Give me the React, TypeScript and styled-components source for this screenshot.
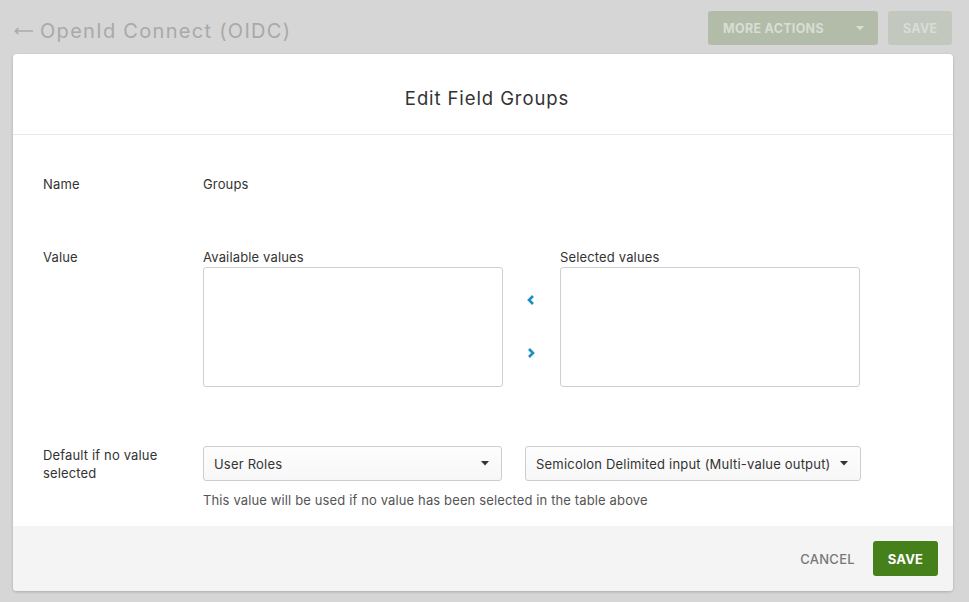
import React from "react";
import styled, { createGlobalStyle } from "styled-components";

const Global = createGlobalStyle`
  html, body { margin: 0; padding: 0; }
  body {
    background: #d6d6d6;
    font-family: "Inter", "Noto Sans", sans-serif;
    color: #333;
    width: 969px;
    height: 602px;
    overflow: hidden;
  }
`;

const Page = styled.div`
  display: flex;
  flex-direction: column;
  padding: 11px 16px 0 13px;
  width: 969px;
  box-sizing: border-box;
`;

const TopBar = styled.div`
  display: flex;
  align-items: center;
  height: 34px;
  margin-bottom: 9px;
  padding-right: 1px;
`;

const BackTitle = styled.div`
  display: flex;
  align-items: center;
  gap: 7px;
  flex: 1;
  color: #a9a9a9;
  font-size: 20px;
  letter-spacing: 1.3px;
  padding-top: 6px;
  padding-left: 1px;
`;

const TopButton = styled.div<{ $bg: string; $w: number }>`
  display: flex;
  align-items: center;
  justify-content: space-between;
  background: ${(p) => p.$bg};
  color: #d9ddd5;
  height: 34px;
  width: ${(p) => p.$w}px;
  box-sizing: border-box;
  border-radius: 3px;
  font-size: 12.5px;
  font-weight: 700;
  letter-spacing: 0.3px;
  padding: 0 14px 0 15px;
  margin-left: 10px;
`;

const Modal = styled.div`
  background: #fff;
  border-radius: 4px;
  box-shadow: 0 1px 3px rgba(0, 0, 0, 0.2);
  width: 940px;
  height: 537px;
  display: flex;
  flex-direction: column;
  overflow: hidden;
`;

const ModalHeader = styled.div`
  height: 81px;
  border-bottom: 1px solid #e8e8e8;
  display: flex;
  align-items: center;
  justify-content: center;
  font-size: 18.5px;
  letter-spacing: 0.9px;
  color: #333;
  padding-top: 8px;
  padding-left: 8px;
  box-sizing: border-box;
`;

const ModalBody = styled.div`
  flex: 1;
  padding: 40px 30px 0 30px;
  display: flex;
  flex-direction: column;
`;

const Row = styled.div<{ $mb: number }>`
  display: grid;
  grid-template-columns: 160px 1fr;
  margin-bottom: ${(p) => p.$mb}px;
  font-size: 13px;
  line-height: 18px;
  letter-spacing: 0.15px;
`;

const Label = styled.div`
  color: #333;
`;

const Value = styled.div`
  color: #333;
`;

const Picker = styled.div`
  display: flex;
  align-items: flex-start;
`;

const ListCol = styled.div`
  display: flex;
  flex-direction: column;
  gap: 1px;
`;

const ListBox = styled.div`
  width: 300px;
  height: 120px;
  border: 1px solid #cfcfcf;
  border-radius: 3px;
  box-sizing: border-box;
  background: #fff;
`;

const Arrows = styled.div`
  width: 57px;
  display: flex;
  flex-direction: column;
  align-items: center;
  padding-top: 47px;
  padding-right: 1px;
  box-sizing: border-box;
  gap: 43px;
`;

const SelectRow = styled.div`
  display: flex;
  gap: 23px;
`;

const Select = styled.div<{ $w?: number }>`
  display: flex;
  align-items: center;
  justify-content: space-between;
  gap: 9px;
  height: 35px;
  ${(p) => (p.$w ? `width: ${p.$w}px;` : "")}
  box-sizing: border-box;
  border: 1px solid #cdcdcd;
  border-radius: 3px;
  background: linear-gradient(#fdfdfd, #f7f7f7);
  padding: 0 12px 0 10px;
  font-size: 13px;
  letter-spacing: 0.2px;
  color: #333;
`;

const Help = styled.div`
  margin-top: 10px;
  font-size: 13px;
  letter-spacing: 0.13px;
  color: #555;
`;

const Footer = styled.div`
  height: 65px;
  background: #f4f4f4;
  display: flex;
  align-items: center;
  justify-content: flex-end;
  padding-right: 15px;
  gap: 18px;
`;

const Cancel = styled.div`
  color: #777;
  font-size: 13px;
  font-weight: 500;
  letter-spacing: 0.3px;
`;

const SaveBtn = styled.div`
  background: #45801a;
  color: #fff;
  font-weight: 700;
  font-size: 13px;
  height: 35px;
  width: 65px;
  border-radius: 3px;
  display: flex;
  align-items: center;
  justify-content: center;
  letter-spacing: 0.2px;
`;

const Caret = ({ color = "#333" }: { color?: string }) => (
  <svg width="8" height="5" viewBox="0 0 8 5">
    <path d="M0 0 H8 L4 4.5 Z" fill={color} />
  </svg>
);

const Chevron = ({ dir }: { dir: "left" | "right" }) => (
  <svg width="8" height="10" viewBox="0 0 8 10">
    <path
      d={dir === "left" ? "M6 1 L2 5 L6 9" : "M2 1 L6 5 L2 9"}
      fill="none"
      stroke="#1a8fc4"
      strokeWidth="2.6"
    />
  </svg>
);

const BackArrow = () => (
  <svg width="19" height="8" viewBox="0 0 19 8">
    <path d="M1 4 H19 M1 4 L4.5 1 M1 4 L4.5 7" stroke="#a9a9a9" strokeWidth="1.6" fill="none" />
  </svg>
);

export default function App() {
  return (
    <>
      <Global />
      <Page>
        <TopBar>
          <BackTitle>
            <BackArrow />
            <span>OpenId Connect (OIDC)</span>
          </BackTitle>
          <TopButton $bg="#b2bca8" $w={170}>
            <span>MORE ACTIONS</span>
            <Caret color="#d9ddd5" />
          </TopButton>
          <TopButton $bg="#c2c8bd" $w={64}>
            <span>SAVE</span>
          </TopButton>
        </TopBar>
        <Modal>
          <ModalHeader>Edit Field Groups</ModalHeader>
          <ModalBody>
            <Row $mb={55}>
              <Label>Name</Label>
              <Value>Groups</Value>
            </Row>
            <Row $mb={59}>
              <Label>Value</Label>
              <Picker>
                <ListCol>
                  <span>Available values</span>
                  <ListBox />
                </ListCol>
                <Arrows>
                  <Chevron dir="left" />
                  <Chevron dir="right" />
                </Arrows>
                <ListCol>
                  <span>Selected values</span>
                  <ListBox />
                </ListCol>
              </Picker>
            </Row>
            <Row $mb={0}>
              <Label>
                Default if no value
                <br />
                selected
              </Label>
              <div>
                <SelectRow>
                  <Select $w={299}>
                    <span>User Roles</span>
                    <Caret />
                  </Select>
                  <Select $w={336}>
                    <span>Semicolon Delimited input (Multi-value output)</span>
                    <Caret />
                  </Select>
                </SelectRow>
                <Help>This value will be used if no value has been selected in the table above</Help>
              </div>
            </Row>
          </ModalBody>
          <Footer>
            <Cancel>CANCEL</Cancel>
            <SaveBtn>SAVE</SaveBtn>
          </Footer>
        </Modal>
      </Page>
    </>
  );
}
